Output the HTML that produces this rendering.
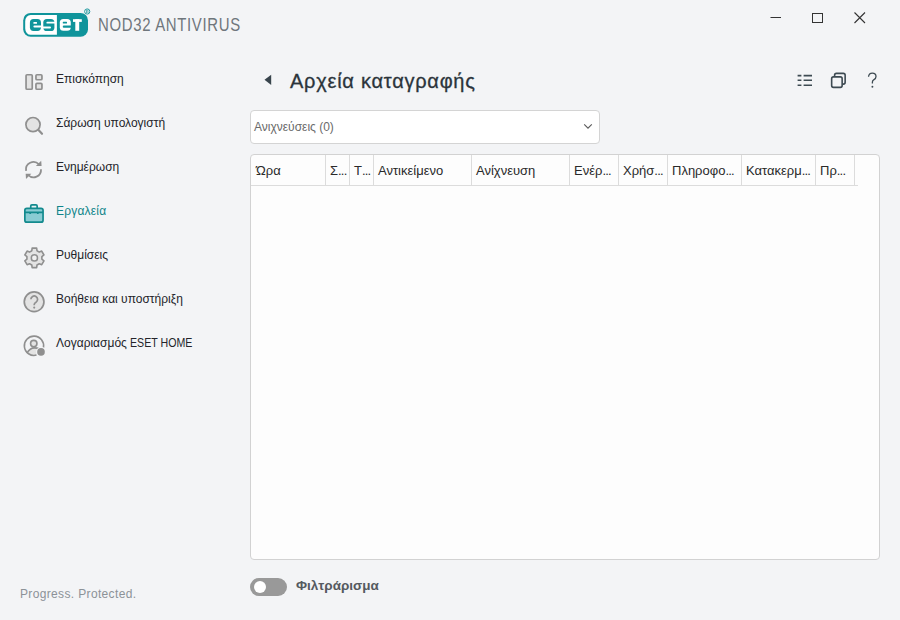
<!DOCTYPE html>
<html><head><meta charset="utf-8">
<style>
*{margin:0;padding:0;box-sizing:border-box}
html,body{width:900px;height:620px;overflow:hidden;background:#f3f4f6;font-family:"Liberation Sans",sans-serif}
.a{position:absolute;white-space:nowrap}
.nav{position:absolute;left:56px;font-size:12px;line-height:12px;color:#24242a}
.ico{position:absolute}
.th{position:absolute;top:164px;font-size:13px;line-height:13px;color:#2a2a2a}
.el{letter-spacing:-0.8px}
.sep{position:absolute;top:155px;width:1px;height:30px;background:#dcdcdc}
</style></head><body>

<!-- logo -->
<svg class="ico" style="left:0;top:0" width="100" height="40" viewBox="0 0 100 40">
  <rect x="23.2" y="12.9" width="64.8" height="23.8" rx="7.5" fill="#0f949b"/>
  <path d="M56.9 15 V34.8 H30.6 A5.4 6.4 0 0 1 25.2 28.4 V21.4 A5.4 6.4 0 0 1 30.6 15 Z" fill="#fff"/>
  <g fill="#0f949b">
    <rect x="29.9" y="19.1" width="11.1" height="11.8" rx="3.6"/>
    <rect x="43.3" y="18.9" width="11.1" height="12.2" rx="3.6"/>
  </g>
  <g fill="#fff">
    <rect x="33.4" y="22" width="3.6" height="1.8" rx="0.5"/>
    <path d="M34.4 25.6 H42 V27.6 H34.4 A1 1 0 0 1 34.4 25.6 Z"/>
    <path d="M47.3 21.8 H55 V23.6 H47.3 A0.9 0.9 0 0 1 47.3 21.8 Z"/>
    <path d="M42.5 26.6 H50.1 A0.9 0.9 0 0 1 50.1 28.4 H42.5 Z"/>
    <rect x="59.8" y="18.9" width="11" height="11.9" rx="3.6"/>
    <rect x="73" y="19.2" width="8.8" height="2.7"/>
    <rect x="75.3" y="19.2" width="3.9" height="11.6"/>
  </g>
  <g fill="#0f949b">
    <rect x="62.8" y="21.8" width="4.2" height="1.8" rx="0.5"/>
    <path d="M63.8 25.6 H71 V27.7 H63.8 A1.05 1.05 0 0 1 63.8 25.6 Z"/>
  </g>
  <circle cx="87.2" cy="11.5" r="2.6" fill="none" stroke="#1f9aa0" stroke-width="1"/>
  <path d="M86.5 13 V10.3 H87.5 Q88.3 10.3 88.3 11.1 Q88.3 11.8 87.5 11.8 L88.3 13" fill="none" stroke="#1f9aa0" stroke-width="0.7"/>
</svg>
<div class="a" style="left:97.8px;top:16px;font-size:18px;line-height:18px;color:#6f767c;letter-spacing:0.8px;transform:scaleX(0.83);transform-origin:0 0">NOD32 ANTIVIRUS</div>

<!-- window controls -->
<svg class="ico" style="left:760px;top:5px" width="120" height="25">
  <path d="M10.5 12.5 H21" stroke="#333" stroke-width="1"/>
  <rect x="52.5" y="8.5" width="10" height="9" fill="none" stroke="#333" stroke-width="1"/>
  <path d="M94.5 7.5 L105 18 M105 7.5 L94.5 18" stroke="#333" stroke-width="1.1"/>
</svg>

<!-- sidebar -->
<div class="nav" style="top:73px">Επισκόπηση</div>
<div class="nav" style="top:117px">Σάρωση υπολογιστή</div>
<div class="nav" style="top:161px">Ενημέρωση</div>
<div class="nav" style="top:205px;color:#0f858a;letter-spacing:0.2px">Εργαλεία</div>
<div class="nav" style="top:249px">Ρυθμίσεις</div>
<div class="nav" style="top:293px">Βοήθεια και υποστήριξη</div>
<div class="nav" style="top:337px">Λογαριασμός <span style="display:inline-block;transform:scaleX(0.885);transform-origin:0 0">ESET HOME</span></div>

<svg class="ico" style="left:0;top:0" width="60" height="370">
  <g fill="#e3e3e3" stroke="#8f8f8f" stroke-width="1.7">
    <!-- overview -->
    <rect x="26.05" y="74.75" width="6.2" height="14.5" rx="1"/>
    <rect x="35.95" y="74.75" width="6" height="5" rx="1"/>
    <rect x="35.95" y="83.35" width="6" height="5.9" rx="1"/>
    <!-- search -->
    <circle cx="33" cy="124.6" r="7.1"/>
    <path d="M38.5 130 L42 133.8" stroke-width="2.2" stroke-linecap="round"/>
  </g>
  <!-- refresh -->
  <g fill="none" stroke="#8f8f8f" stroke-width="1.8">
    <path d="M26.1 170.8 A7.45 7.6 0 0 1 38.9 164.4"/>
    <path d="M41 169.2 A7.45 7.6 0 0 1 28.2 175"/>
  </g>
  <g fill="#8f8f8f">
    <path d="M35.9 166.1 L41.6 166.1 L41.2 160.8 Z"/>
    <path d="M25.7 173.7 L31.3 173.7 L26 179 Z"/>
  </g>
  <!-- briefcase -->
  <g stroke="#138a8e" stroke-width="1.7">
    <rect x="30.75" y="204.85" width="6.4" height="4" rx="1.2" fill="#e6f2f3"/>
    <rect x="24.85" y="208.35" width="18.2" height="13.8" rx="2" fill="#89ccd3"/>
    <path d="M24.85 212.4 H43.05 M30.2 212.4 V214 M37.8 212.4 V214" fill="none"/>
  </g>
  <!-- gear -->
  <path d="M31.80 250.76 L32.15 248.16 L36.65 248.16 L37.00 250.76 L39.29 252.08 L41.71 251.08 L43.96 254.98 L41.88 256.58 L41.88 259.22 L43.96 260.82 L41.71 264.72 L39.29 263.72 L37.00 265.04 L36.65 267.64 L32.15 267.64 L31.80 265.04 L29.51 263.72 L27.09 264.72 L24.84 260.82 L26.92 259.22 L26.92 256.58 L24.84 254.98 L27.09 251.08 L29.51 252.08 Z" fill="#e3e3e3" stroke="#8f8f8f" stroke-width="1.6" stroke-linejoin="round"/>
  <circle cx="34.4" cy="257.9" r="3.1" fill="#f0f0f0" stroke="#8f8f8f" stroke-width="1.5"/>
  <!-- help -->
  <circle cx="34.1" cy="301.8" r="9.85" fill="#e3e3e3" stroke="#8f8f8f" stroke-width="1.7"/>
  <path d="M30.9 299.3 A3.35 3.35 0 1 1 36 302.2 Q34.2 303.2 34.2 304.8 V305.3" fill="none" stroke="#8f8f8f" stroke-width="1.7"/>
  <circle cx="34.2" cy="307.6" r="1.05" fill="#8f8f8f"/>
  <!-- account -->
  <clipPath id="acc"><circle cx="34" cy="345.8" r="9.65"/></clipPath>
  <path d="M26.8 353.2 Q30 347.9 34.5 347.9 Q37.5 347.9 39.5 349 L41 358 L26 358 Z" fill="#e3e3e3" clip-path="url(#acc)"/>
  <path d="M26.8 353.2 Q30 347.9 34.5 347.9 Q37.5 347.9 39.5 349" fill="none" stroke="#8f8f8f" stroke-width="1.6"/>
  <circle cx="33.75" cy="343.6" r="3.2" fill="#e3e3e3" stroke="#8f8f8f" stroke-width="1.6"/>
  <path d="M43.5 347.5 A9.65 9.65 0 1 0 36.5 355.1" fill="none" stroke="#8f8f8f" stroke-width="1.6"/>
  <circle cx="41" cy="351.9" r="4.9" fill="#f3f4f6"/>
  <circle cx="41" cy="351.9" r="3.8" fill="#8f8f8f"/>
</svg>

<div class="a" style="left:20px;top:588px;font-size:12px;line-height:12px;color:#8c9298;letter-spacing:0.35px">Progress. Protected.</div>

<!-- header -->
<svg class="ico" style="left:258px;top:68px" width="20" height="24">
  <path d="M6.5 11.8 L13.2 6.8 V17 Z" fill="#38444c"/>
</svg>
<div class="a" style="left:290px;top:71px;font-size:20px;line-height:20px;color:#2b343b;letter-spacing:0.75px;-webkit-text-stroke:0.3px #2b343b">Αρχεία καταγραφής</div>

<!-- dropdown -->
<div class="a" style="left:250px;top:110px;width:350px;height:34px;border:1px solid #d4d4d4;border-radius:4px;background:#fff"></div>
<div class="a" style="left:254px;top:121px;font-size:12px;line-height:12px;color:#6a6a6a">Ανιχνεύσεις (0)</div>

<!-- table -->
<div class="a" style="left:250px;top:154px;width:630px;height:406px;border:1px solid #d2d2d2;border-radius:4px;background:#fdfdfd"></div>


<!-- table header -->
<div class="sep" style="left:325px"></div>
<div class="sep" style="left:349px"></div>
<div class="sep" style="left:373px"></div>
<div class="sep" style="left:471px"></div>
<div class="sep" style="left:569px"></div>
<div class="sep" style="left:618px"></div>
<div class="sep" style="left:667px"></div>
<div class="sep" style="left:741px"></div>
<div class="sep" style="left:815px"></div>
<div class="sep" style="left:854px"></div>
<div class="a" style="left:251px;top:185px;width:607px;height:1px;background:#dcdcdc"></div>
<div class="th" style="left:256px">Ώρα</div>
<div class="th" style="left:330px">Σ<span class="el">...</span></div>
<div class="th" style="left:354px">Τ<span class="el">...</span></div>
<div class="th" style="left:378px">Αντικείμενο</div>
<div class="th" style="left:476px">Ανίχνευση</div>
<div class="th" style="left:574px">Ενέρ<span class="el">...</span></div>
<div class="th" style="left:623px">Χρήσ<span class="el">...</span></div>
<div class="th" style="left:672px">Πληροφο<span class="el">...</span></div>
<div class="th" style="left:746px">Κατακερμ<span class="el">...</span></div>
<div class="th" style="left:820px">Πρ<span class="el">...</span></div>

<!-- dropdown chevron -->
<svg class="ico" style="left:580px;top:118px" width="16" height="16">
  <path d="M4.2 6.4 L8 10.2 L11.8 6.4" fill="none" stroke="#5c5c5c" stroke-width="1.15"/>
</svg>

<!-- right icons -->
<svg class="ico" style="left:790px;top:65px" width="100" height="30">
  <g stroke="#3d4a52" stroke-width="1.6" fill="none">
    <path d="M7.6 10.6 H11.4 M13.6 10.6 H22 M7.6 15.2 H11.4 M13.6 15.2 H22 M7.6 20.2 H11.4 M13.6 20.2 H22"/>
    <path d="M44.6 11.7 V10.2 Q44.6 8.35 46.45 8.35 H53.3 Q55.15 8.35 55.15 10.2 V17.3 Q55.15 19.15 53.3 19.15 H52.3"/>
    <rect x="41.65" y="11.85" width="10.5" height="10.5" rx="1.8"/>
    <path d="M78.5 11.8 Q78.9 8.1 82.3 8.1 Q86 8.1 86 11.5 Q86 13.5 84 14.6 Q82.4 15.5 82.4 17 V18.6" stroke-width="1.3"/>
  </g>
  <circle cx="82.4" cy="21.8" r="0.95" fill="#3d4a52"/>
</svg>

<!-- toggle -->
<div class="a" style="left:250.3px;top:577.8px;width:37.2px;height:17.9px;border-radius:9px;background:#999"></div>
<div class="a" style="left:253.6px;top:580.9px;width:12.2px;height:12.2px;border-radius:50%;background:#fff"></div>
<div class="a" style="left:296px;top:579px;font-size:13.5px;line-height:14px;font-weight:bold;color:#555a60">Φιλτράρισμα</div>
</body></html>
